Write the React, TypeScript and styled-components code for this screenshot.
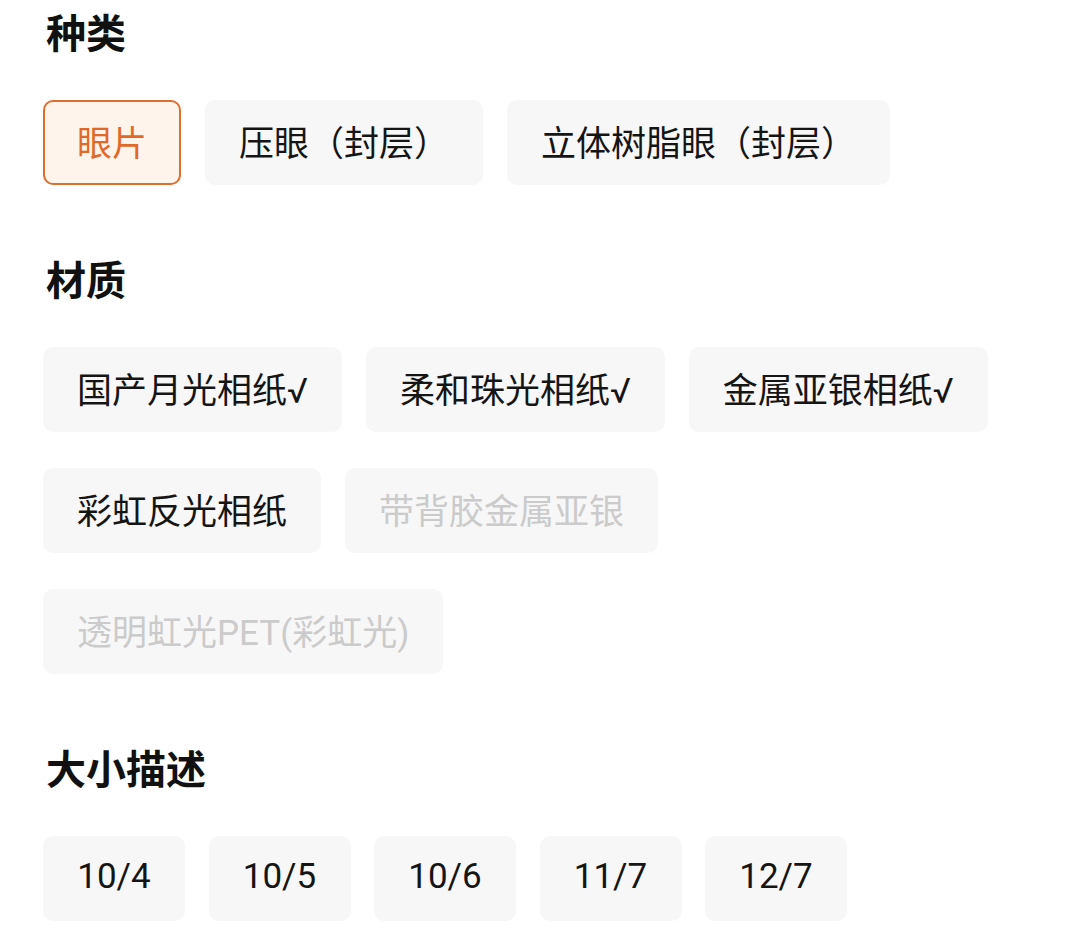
import React from 'react'
import styled, { createGlobalStyle } from 'styled-components'

const GlobalStyle = createGlobalStyle`
  html, body {
    margin: 0;
    padding: 0;
    background: #fff;
  }
  body {
    font-family: Roboto, "Noto Sans CJK SC", sans-serif;
  }
`

const Page = styled.div`
  display: flex;
  flex-direction: column;
  padding: 7px 43px 0;
`

const Section = styled.section`
  display: flex;
  flex-direction: column;
  gap: 37px;
  margin-bottom: 69px;
`

const Title = styled.h2`
  color: #111;
  font-size: 40px;
  font-weight: 700;
  line-height: 56px;
  margin: 0;
  padding-left: 3px;
`

const Options = styled.div<{ $gap?: number }>`
  display: flex;
  flex-wrap: wrap;
  gap: 36px ${p => p.$gap ?? 24}px;
`

const Chip = styled.div<{ $active?: boolean; $disabled?: boolean; $width?: number }>`
  align-items: center;
  background-color: ${p => (p.$active ? '#fff4ec' : '#f7f7f7')};
  border: 2px solid ${p => (p.$active ? '#df6d2e' : 'transparent')};
  border-radius: 10px;
  box-sizing: border-box;
  color: ${p => (p.$active ? '#e0692a' : p.$disabled ? '#cbcbcb' : '#151515')};
  display: flex;
  font-size: 35px;
  height: 85px;
  justify-content: center;
  padding: 0 32px 5px;
  ${p => p.$width && `width: ${p.$width}px;`}
`

interface IOption {
  label: string
  active?: boolean
  disabled?: boolean
}

const kinds: IOption[] = [
  { label: '眼片', active: true },
  { label: '压眼（封层）' },
  { label: '立体树脂眼（封层）' }
]

const materials: IOption[] = [
  { label: '国产月光相纸√' },
  { label: '柔和珠光相纸√' },
  { label: '金属亚银相纸√' },
  { label: '彩虹反光相纸' },
  { label: '带背胶金属亚银', disabled: true },
  { label: '透明虹光PET(彩虹光)', disabled: true }
]

const sizes: IOption[] = [
  { label: '10/4' },
  { label: '10/5' },
  { label: '10/6' },
  { label: '11/7' },
  { label: '12/7' }
]

interface IGroup {
  title: string
  items: IOption[]
  width?: number
  gap?: number
}

const Group = ({ title, items, width, gap }: IGroup) => (
  <Section>
    <Title>{title}</Title>
    <Options $gap={gap}>
      {items.map(item => (
        <Chip key={item.label} $active={item.active} $disabled={item.disabled} $width={width}>
          {item.label}
        </Chip>
      ))}
    </Options>
  </Section>
)

const App = () => {
  return (
    <>
      <GlobalStyle />
      <Page>
        <Group title='种类' items={kinds} />
        <Group title='材质' items={materials} />
        <Group title='大小描述' items={sizes} width={142} gap={23.5} />
      </Page>
    </>
  )
}

export default App
